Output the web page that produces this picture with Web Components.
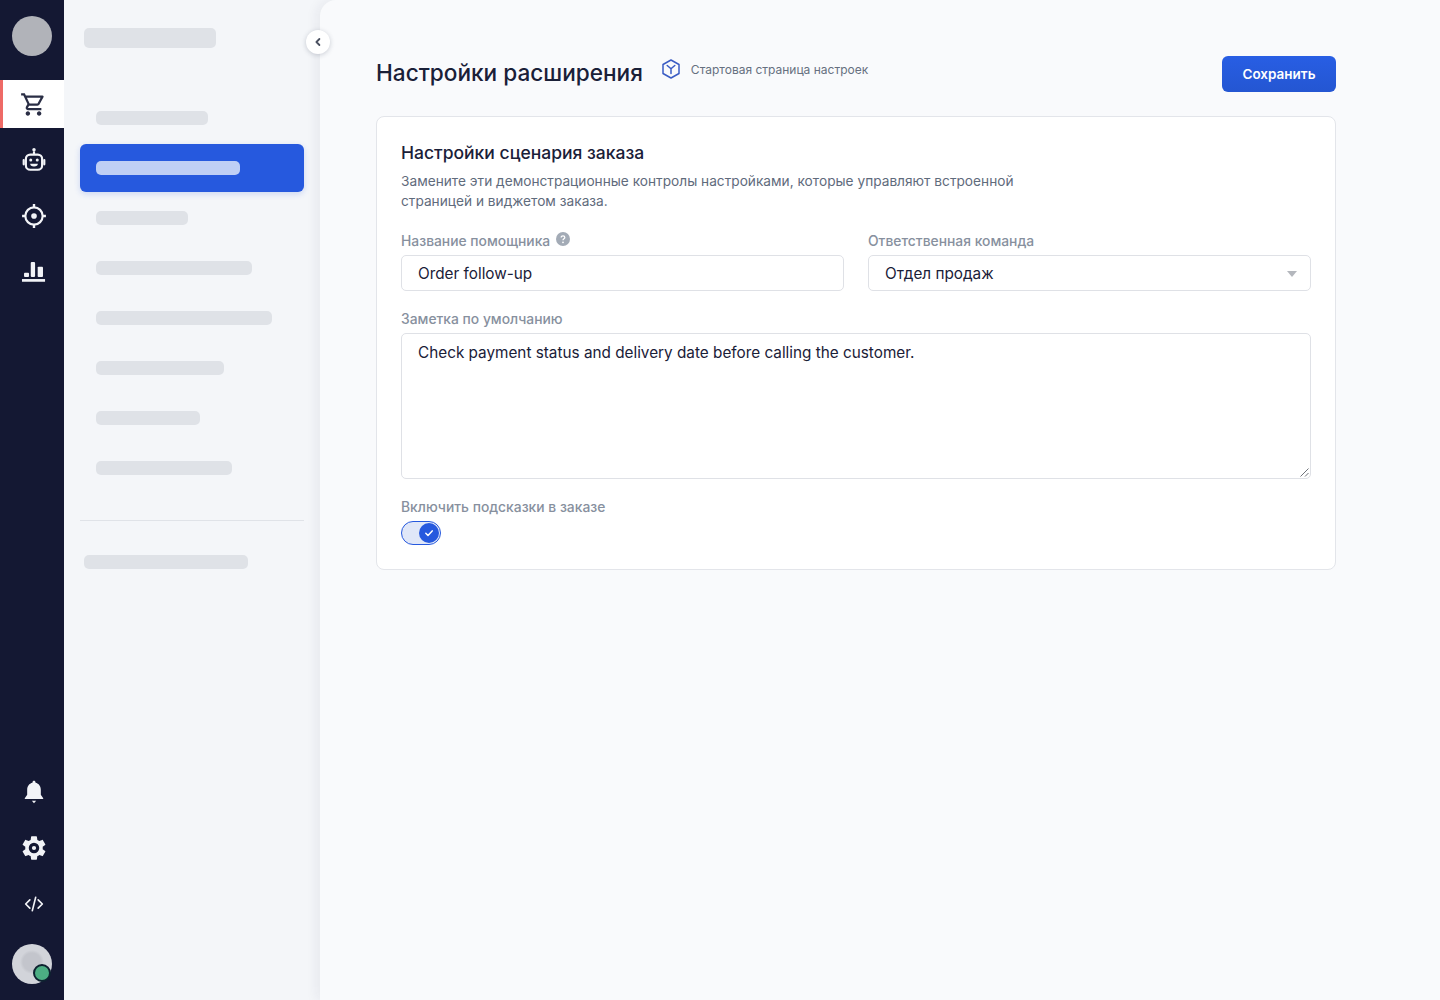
<!DOCTYPE html>
<html lang="ru">
<head>
<meta charset="utf-8">
<title>Настройки расширения</title>
<style>
    html, body { height: 100%; }
    body {
        margin: 0;
        font-family: Inter, "Liberation Sans", sans-serif;
        color: #1a2038;
        background: #f4f6f9;
        overflow: hidden;
    }
</style>
</head>
<body>
<app-shell>
    <rail-nav slot="rail">
        <rail-item active>
            <svg viewBox="0 0 24 24" width="27" height="27" fill="currentColor"><path d="M15.55 13c.75 0 1.41-.41 1.75-1.03l3.58-6.49A.996.996 0 0 0 20.01 4H5.21l-.94-2H1v2h2l3.6 7.59-1.35 2.44C4.52 15.37 5.48 17 7 17h12v-2H7l1.1-2h7.45zM6.16 6h12.15l-2.76 5H8.53L6.16 6zM7 18c-1.1 0-1.99.9-1.99 2S5.9 22 7 22s2-.9 2-2-.9-2-2-2zm10 0c-1.1 0-1.99.9-1.99 2s.89 2 1.99 2 2-.9 2-2-.9-2-2-2z"/></svg>
        </rail-item>
        <rail-item>
            <svg viewBox="0 0 24 24" width="26" height="26" fill="none" stroke="currentColor" stroke-width="2"><circle cx="12" cy="2.6" r="1.6" fill="currentColor" stroke="none"/><path d="M12 4v3"/><rect x="4.5" y="7" width="15" height="14" rx="4"/><path d="M2.5 12v4M21.5 12v4" stroke-linecap="round"/><circle cx="9" cy="12" r="1.4" fill="currentColor" stroke="none"/><circle cx="15" cy="12" r="1.4" fill="currentColor" stroke="none"/><path d="M8.5 15.500h7a3.500 2.500 0 0 1-7 0z" fill="currentColor" stroke="none"/></svg>
        </rail-item>
        <rail-item>
            <svg viewBox="0 0 24 24" width="26" height="26" fill="none" stroke="currentColor" stroke-width="2"><circle cx="12" cy="12" r="8"/><circle cx="12" cy="12" r="2.6" fill="currentColor" stroke="none"/><path d="M12 1v3M12 20v3M1 12h3M20 12h3" stroke-width="2.2"/></svg>
        </rail-item>
        <rail-item>
            <svg viewBox="0 0 24 24" width="26" height="26" fill="currentColor"><rect x="2.8" y="12.7" width="4.600" height="3.900" rx=".8"/><rect x="9" y="2.800" width="4" height="13.800" rx="1"/><rect x="15.400" y="7.100" width="4.900" height="9.500" rx=".8"/><rect x=".9" y="18.500" width="21.300" height="2.500"/></svg>
        </rail-item>
        <rail-item slot="bottom">
            <svg viewBox="0 0 24 24" width="26" height="26" fill="currentColor"><path d="M12 1.500c.8 0 1.400.6 1.400 1.400v.6c3 .7 4.900 3.200 4.900 6.400v4.600l2.200 3.200c.2.4 0 .8-.5.8H4c-.5 0-.7-.4-.5-.8l2.200-3.200V9.900c0-3.200 1.900-5.700 4.900-6.400v-.6c0-.8.6-1.400 1.400-1.400z"/><path d="M10 20h4l-2 2.400z"/></svg>
        </rail-item>
        <rail-item slot="bottom">
            <svg viewBox="0 0 24 24" width="28" height="28" fill="currentColor"><path fill-rule="evenodd" d="M19.43 12.98c.04-.32.07-.64.07-.98s-.03-.66-.07-.98l2.110-1.650c.19-.15.24-.42.12-.64l-2-3.460c-.12-.22-.39-.3-.61-.22l-2.490 1c-.52-.4-1.080-.73-1.690-.98l-.38-2.650A.488.488 0 0 0 14 2h-4c-.25 0-.46.18-.49.42l-.38 2.650c-.61.25-1.170.59-1.690.98l-2.490-1c-.23-.09-.49 0-.61.22l-2 3.460c-.13.22-.07.49.12.64l2.110 1.650c-.04.32-.07.65-.07.98s.03.66.07.98l-2.110 1.650c-.19.15-.24.42-.12.64l2 3.460c.12.22.39.3.61.22l2.490-1c.52.4 1.080.73 1.690.98l.38 2.650c.03.24.24.42.49.42h4c.25 0 .46-.18.49-.42l.38-2.650c.61-.25 1.170-.59 1.690-.98l2.490 1c.23.09.49 0 .61-.22l2-3.460c.12-.22.07-.49-.12-.64l-2.110-1.650zM12 16.500a4.500 4.500 0 1 1 0-9 4.500 4.500 0 0 1 0 9zm0-2.700a1.800 1.800 0 1 0 0-3.600 1.800 1.800 0 0 0 0 3.600z"/></svg>
        </rail-item>
        <rail-item slot="bottom">
            <svg viewBox="0 0 24 24" width="20" height="20" fill="none" stroke="currentColor" stroke-width="2" stroke-linecap="round" stroke-linejoin="round"><path d="M7 7l-5 5 5 5M17 7l5 5-5 5M14 4l-4 16"/></svg>
        </rail-item>
    </rail-nav>

    <sub-nav slot="nav">
        <skeleton-bar slot="head" w="132" h="20" tone="head"></skeleton-bar>
        <nav-row><skeleton-bar w="112"></skeleton-bar></nav-row>
        <nav-row active><skeleton-bar w="144" tone="light"></skeleton-bar></nav-row>
        <nav-row><skeleton-bar w="92"></skeleton-bar></nav-row>
        <nav-row><skeleton-bar w="156"></skeleton-bar></nav-row>
        <nav-row><skeleton-bar w="176"></skeleton-bar></nav-row>
        <nav-row><skeleton-bar w="128"></skeleton-bar></nav-row>
        <nav-row><skeleton-bar w="104"></skeleton-bar></nav-row>
        <nav-row><skeleton-bar w="136"></skeleton-bar></nav-row>
        <skeleton-bar slot="foot" w="164"></skeleton-bar>
    </sub-nav>

    <page-header title="Настройки расширения" crumb="Стартовая страница настроек" action="Сохранить"></page-header>

    <settings-card heading="Настройки сценария заказа" note="Замените эти демонстрационные контролы настройками, которые управляют встроенной страницей и виджетом заказа.">
        <form-field label="Название помощника" hint>
            <text-box>Order follow-up</text-box>
        </form-field>
        <form-field label="Ответственная команда">
            <text-box select>Отдел продаж</text-box>
        </form-field>
        <form-field label="Заметка по умолчанию" wide>
            <text-box multiline>Check payment status and delivery date before calling the customer.</text-box>
        </form-field>
        <form-field label="Включить подсказки в заказе" wide>
            <toggle-switch></toggle-switch>
        </form-field>
    </settings-card>
</app-shell>

<script>
const BOX_RESET = '*, *::before, *::after { box-sizing: border-box; margin: 0; padding: 0; } :host { box-sizing: border-box; }';

class AppShell extends HTMLElement {
    constructor() {
        super();
        this.attachShadow({mode: 'open'}).innerHTML = `
            <style>
                ${BOX_RESET}
                :host { display: flex; height: 100vh; }
                main {
                    position: relative;
                    flex: 1;
                    min-width: 0;
                    padding: 56px 104px 0 56px;
                    background: #f9fafc;
                    border-top-left-radius: 16px;
                    box-shadow: -4px 0 12px rgba(30, 40, 70, .06);
                }
                .collapse {
                    position: absolute;
                    left: -14px;
                    top: 30px;
                    width: 24px;
                    height: 24px;
                    display: flex;
                    align-items: center;
                    justify-content: center;
                    border-radius: 50%;
                    background: #fff;
                    box-shadow: 0 1px 5px rgba(30, 40, 70, .22);
                    color: #4a5060;
                }
            </style>
            <slot name="rail"></slot>
            <slot name="nav"></slot>
            <main>
                <span class="collapse">
                    <svg viewBox="0 0 10 10" width="10" height="10" fill="none" stroke="currentColor" stroke-width="1.8" stroke-linecap="round" stroke-linejoin="round"><path d="M6.4 2L3.4 5l3 3"/></svg>
                </span>
                <slot></slot>
            </main>
        `;
    }
}

class RailNav extends HTMLElement {
    constructor() {
        super();
        this.attachShadow({mode: 'open'}).innerHTML = `
            <style>
                ${BOX_RESET}
                :host {
                    display: flex;
                    flex-direction: column;
                    flex: none;
                    width: 64px;
                    padding: 16px 0;
                    background: #141833;
                }
                .avatar { width: 40px; height: 40px; margin: 0 12px 24px; border-radius: 50%; background: #b1b3b9; }
                .top, .bottom { display: flex; flex-direction: column; gap: 8px; }
                .bottom { margin-top: auto; }
                .me {
                    position: relative;
                    width: 40px;
                    height: 40px;
                    margin: 8px 12px 0;
                    border-radius: 50%;
                    background: radial-gradient(circle at 50% 45%, #c3c5cc 0 9px, #d2d4da 12px);
                }
                .me i {
                    position: absolute;
                    right: 1px;
                    bottom: 2px;
                    width: 18px;
                    height: 18px;
                    border-radius: 50%;
                    background: #4cae83;
                    border: 2.5px solid #0e2230;
                }
            </style>
            <div class="avatar"></div>
            <div class="top"><slot></slot></div>
            <div class="bottom"><slot name="bottom"></slot><div class="me"><i></i></div></div>
        `;
    }
}

class RailItem extends HTMLElement {
    constructor() {
        super();
        this.attachShadow({mode: 'open'}).innerHTML = `
            <style>
                ${BOX_RESET}
                :host {
                    display: flex;
                    align-items: center;
                    justify-content: center;
                    height: 48px;
                    color: #f2f3f7;
                    padding-left: 3px;
                }
                :host([active]) {
                    background: #fff;
                    color: #2a2e45;
                    border-left: 3px solid #ee6a66;
                    padding-left: 0;
                }
            </style>
            <slot></slot>
        `;
    }
}

class SkeletonBar extends HTMLElement {
    constructor() {
        super();
        this.attachShadow({mode: 'open'}).innerHTML = `
            <style>
                :host { display: block; border-radius: 5px; background: #dfe2e7; }
                :host([tone="light"]) { background: #bfcff5; }
            </style>
        `;
    }

    connectedCallback() {
        this.style.width = `${this.getAttribute('w')}px`;
        this.style.height = `${this.getAttribute('h') || 14}px`;
    }
}

class SubNav extends HTMLElement {
    constructor() {
        super();
        this.attachShadow({mode: 'open'}).innerHTML = `
            <style>
                ${BOX_RESET}
                :host {
                    display: block;
                    flex: none;
                    width: 256px;
                    padding: 28px 16px 0;
                    background: #f4f6f9;
                }
                .head { padding: 0 4px; margin-bottom: 46px; }
                .rows { display: flex; flex-direction: column; gap: 2px; }
                .foot { margin-top: 28px; padding: 34px 4px 0; border-top: 1px solid #e0e3e8; }
            </style>
            <div class="head"><slot name="head"></slot></div>
            <div class="rows"><slot></slot></div>
            <div class="foot"><slot name="foot"></slot></div>
        `;
    }
}

class NavRow extends HTMLElement {
    constructor() {
        super();
        this.attachShadow({mode: 'open'}).innerHTML = `
            <style>
                ${BOX_RESET}
                :host {
                    display: flex;
                    align-items: center;
                    height: 48px;
                    padding: 0 16px;
                    border-radius: 6px;
                }
                :host([active]) {
                    background: #2659de;
                    box-shadow: 0 2px 6px rgba(38, 89, 222, .2);
                }
            </style>
            <slot></slot>
        `;
    }
}

class PageHeader extends HTMLElement {
    constructor() {
        super();
        this.attachShadow({mode: 'open'}).innerHTML = `
            <style>
                ${BOX_RESET}
                :host { display: flex; align-items: flex-start; margin-bottom: 24px; height: 36px; }
                h1 { font-size: 22.6px; line-height: 34px; font-weight: 500; color: #1a2038; margin-right: 18px; white-space: nowrap; }
                .crumb { display: flex; align-items: center; gap: 10px; height: 26px; font-size: 12px; color: #667080; white-space: nowrap; }
                .crumb svg { color: #3a5cc4; }
                button {
                    margin-left: auto;
                    width: 114px;
                    height: 36px;
                    border: 0;
                    border-radius: 6px;
                    background: linear-gradient(#285ee4, #2456d2);
                    color: #fff;
                    font: 600 13.5px Inter, "Liberation Sans", sans-serif;
                }
            </style>
            <h1></h1>
            <div class="crumb">
                <svg viewBox="0 0 20 20" width="20" height="20" fill="none" stroke="currentColor" stroke-width="1.5" stroke-linejoin="round" stroke-linecap="round"><path d="M10 1l8 4.500v9L10 19l-8-4.500v-9z"/><path d="M6.200 6.500L10 9.800l3.800-3.300M10 9.800v4.700"/></svg>
                <span></span>
            </div>
            <button type="button"></button>
        `;
    }

    connectedCallback() {
        const root = this.shadowRoot;
        root.querySelector('h1').textContent = this.getAttribute('title');
        root.querySelector('.crumb span').textContent = this.getAttribute('crumb');
        root.querySelector('button').textContent = this.getAttribute('action');
    }
}

class SettingsCard extends HTMLElement {
    constructor() {
        super();
        this.attachShadow({mode: 'open'}).innerHTML = `
            <style>
                ${BOX_RESET}
                :host {
                    display: block;
                    padding: 24px;
                    background: #fff;
                    border: 1px solid #e3e5ea;
                    border-radius: 8px;
                }
                h2 { font-size: 17.5px; line-height: 24px; font-weight: 500; color: #1a2038; }
                p { width: 640px; margin-top: 6px; font-size: 13.7px; line-height: 20px; color: #5f6b7c; }
                .grid { display: grid; grid-template-columns: 1fr 1fr; gap: 18px 24px; margin-top: 20px; }
            </style>
            <h2></h2>
            <p></p>
            <div class="grid"><slot></slot></div>
        `;
    }

    connectedCallback() {
        this.shadowRoot.querySelector('h2').textContent = this.getAttribute('heading');
        this.shadowRoot.querySelector('p').textContent = this.getAttribute('note');
    }
}

class FormField extends HTMLElement {
    constructor() {
        super();
        this.attachShadow({mode: 'open'}).innerHTML = `
            <style>
                ${BOX_RESET}
                :host { display: block; min-width: 0; }
                :host([wide]) { grid-column: 1 / -1; }
                .label { display: flex; align-items: center; gap: 6px; height: 20px; margin-bottom: 4px; font-size: 13.85px; font-weight: 500; color: #87909e; }
                svg { display: none; margin-top: -4px; }
                :host([hint]) svg { display: block; }
            </style>
            <div class="label">
                <span></span>
                <svg viewBox="0 0 14 14" width="14" height="14"><circle cx="7" cy="7" r="7" fill="#a3abb6"/><path d="M5.200 5.500c0-1 .8-1.700 1.800-1.700s1.800.7 1.800 1.600c0 1.400-1.800 1.300-1.800 2.800" fill="none" stroke="#fff" stroke-width="1.300"/><circle cx="7" cy="10.300" r=".9" fill="#fff"/></svg>
            </div>
            <slot></slot>
        `;
    }

    connectedCallback() {
        this.shadowRoot.querySelector('.label span').textContent = this.getAttribute('label');
    }
}

class TextBox extends HTMLElement {
    constructor() {
        super();
        this.attachShadow({mode: 'open'}).innerHTML = `
            <style>
                ${BOX_RESET}
                :host {
                    display: flex;
                    align-items: center;
                    position: relative;
                    height: 36px;
                    padding: 0 16px;
                    background: #fff;
                    border: 1px solid #dfe1e6;
                    border-radius: 5px;
                    font-size: 15.3px;
                    color: #1a2038;
                }
                :host([multiline]) { display: block; height: 146px; padding-top: 9px; line-height: 20px; }
                .arrow, .grip { display: none; position: absolute; }
                :host([select]) .arrow { display: block; right: 13px; top: 15px; }
                :host([multiline]) .grip { display: block; right: 1px; bottom: 1px; }
            </style>
            <slot></slot>
            <svg class="arrow" viewBox="0 0 10 6" width="10" height="6"><path d="M0 0h10L5 6z" fill="#b4b7bd"/></svg>
            <svg class="grip" viewBox="0 0 9 9" width="9" height="9" fill="none" stroke="#6e7279" stroke-width="1"><path d="M.5 8.500l8-8M5 8.500l3.500-3.500"/></svg>
        `;
    }
}

class ToggleSwitch extends HTMLElement {
    constructor() {
        super();
        this.attachShadow({mode: 'open'}).innerHTML = `
            <style>
                ${BOX_RESET}
                :host {
                    display: block;
                    position: relative;
                    width: 40px;
                    height: 24px;
                    background: #e0e7f8;
                    border: 1.5px solid #2659de;
                    border-radius: 12px;
                }
                span {
                    position: absolute;
                    right: 1px;
                    top: .5px;
                    width: 20px;
                    height: 20px;
                    display: flex;
                    align-items: center;
                    justify-content: center;
                    border-radius: 50%;
                    background: #2659de;
                }
            </style>
            <span>
                <svg viewBox="0 0 10 10" width="10" height="10" fill="none" stroke="#fff" stroke-width="1.500" stroke-linecap="round" stroke-linejoin="round"><path d="M1.800 5.300l2.200 2.200 4.200-4.600"/></svg>
            </span>
        `;
    }
}

customElements.define('app-shell', AppShell);
customElements.define('rail-nav', RailNav);
customElements.define('rail-item', RailItem);
customElements.define('skeleton-bar', SkeletonBar);
customElements.define('sub-nav', SubNav);
customElements.define('nav-row', NavRow);
customElements.define('page-header', PageHeader);
customElements.define('settings-card', SettingsCard);
customElements.define('form-field', FormField);
customElements.define('text-box', TextBox);
customElements.define('toggle-switch', ToggleSwitch);
</script>
</body>
</html>
